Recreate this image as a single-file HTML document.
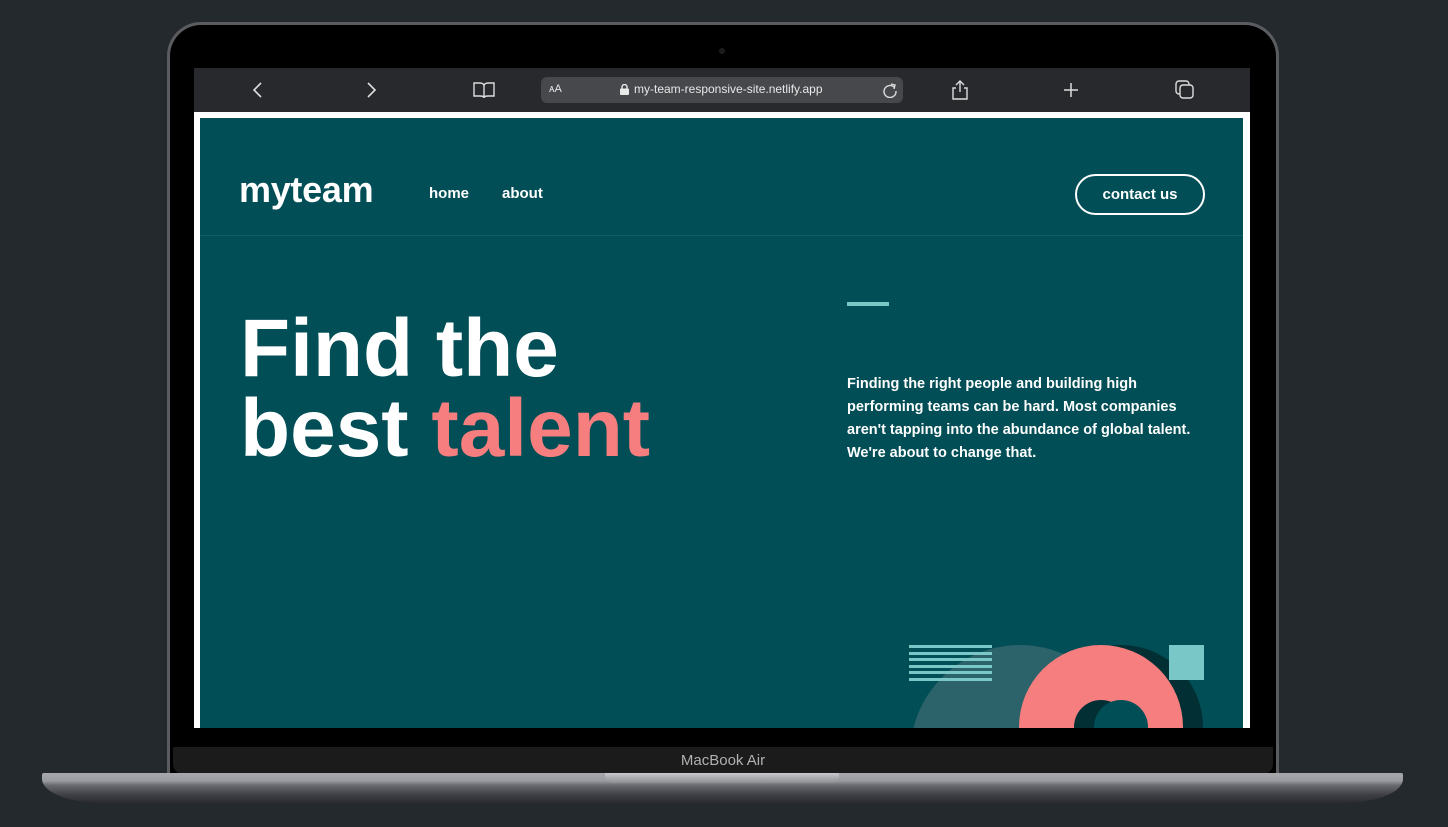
<!DOCTYPE html>
<html><head><meta charset="utf-8"><style>
*{margin:0;padding:0;box-sizing:border-box}
body{width:1448px;height:827px;background:#24292d;position:relative;overflow:hidden;font-family:"Liberation Sans",sans-serif}
.abs{position:absolute}
.lid{left:167px;top:22px;width:1112px;height:756px;border-radius:34px 34px 0 0;background:#000;border:3px solid #5a5c60;border-bottom:none}
.bar{left:194px;top:68px;width:1056px;height:44px;background:#27292c;color:#dcdcdc}
.url{left:347px;top:9px;width:362px;height:26px;background:#46484c;border-radius:6px;font-size:12px;color:#e8e8e8}
.screen{left:194px;top:112px;width:1056px;height:616px;background:#fff}
.teal{left:6px;top:6px;width:1043px;height:610px;background:#014e56;overflow:hidden;color:#fff}
.chin{left:173px;top:747px;width:1100px;height:27px;background:#1b1b1b;border-radius:0 0 10px 10px;color:#b0b0b0;font-size:15px;text-align:center;line-height:28px}
.base{left:42px;top:773px;width:1361px;height:30px;border-radius:2px 2px 60px 60px/2px 2px 24px 24px;background:linear-gradient(#a8a9ad 0,#9a9ba0 8px,#6b6c72 12px,#3e3f45 22px,#2a2b30 30px)}
.notch{left:605px;top:773px;width:234px;height:10px;background:linear-gradient(#c8c9cc,#8d8e92);border-radius:0 0 8px 8px}
</style></head><body>
<div class="abs lid"></div>
<div class="abs" style="left:719px;top:48px;width:6px;height:6px;border-radius:50%;background:#1c1c1e"></div>
<div class="abs bar">
 <svg class="abs" style="left:58px;top:14px" width="14" height="16"><path d="M9 1L2 8l7 7" stroke="#ddd" stroke-width="1.6" fill="none"/></svg>
 <svg class="abs" style="left:170px;top:14px" width="14" height="16"><path d="M4 1l7 7-7 7" stroke="#ddd" stroke-width="1.6" fill="none"/></svg>
 <svg class="abs" style="left:279px;top:13px" width="22" height="18"><path d="M1 2h6c2 0 4 1 4 3v12c0-2-2-2-4-2H1zM21 2h-6c-2 0-4 1-4 3v12c0-2 2-2 4-2h6z" stroke="#ddd" stroke-width="1.4" fill="none"/></svg>
 <div class="abs url"><span class="abs" style="left:8px;top:6px;font-size:11px">ᴀA</span>
  <svg class="abs" style="left:79px;top:7px" width="9" height="11"><rect x="0" y="4.5" width="9" height="6.5" rx="1" fill="#e8e8e8"/><path d="M2 5V3a2.5 2.5 0 015 0v2" stroke="#e8e8e8" stroke-width="1.4" fill="none"/></svg>
  <span class="abs" style="left:93px;top:5px">my-team-responsive-site.netlify.app</span>
  <svg class="abs" style="left:341px;top:5px" width="16" height="16"><path d="M12.5 5.5A6 6 0 1 0 14 9" stroke="#ddd" stroke-width="1.4" fill="none"/><path d="M9 2l4 1-1 4" stroke="#ddd" stroke-width="1.4" fill="none"/></svg>
 </div>
 <svg class="abs" style="left:756px;top:11px" width="20" height="22"><path d="M10 13V2M6 6l4-4 4 4M6 9H3v11h14V9h-3" stroke="#ddd" stroke-width="1.4" fill="none"/></svg>
 <svg class="abs" style="left:869px;top:14px" width="16" height="16"><path d="M8 1v14M1 8h14" stroke="#ddd" stroke-width="1.5"/></svg>
 <svg class="abs" style="left:981px;top:12px" width="20" height="20"><rect x="1" y="1" width="13" height="13" rx="3" stroke="#ddd" stroke-width="1.4" fill="none"/><rect x="5" y="5" width="13" height="13" rx="3" stroke="#ddd" stroke-width="1.4" fill="#27292c"/></svg>
</div>
<div class="abs screen"><div class="abs teal">
 <div class="abs" style="left:39px;top:51px;font-size:36px;font-weight:bold;letter-spacing:-0.3px">myteam</div>
 <div class="abs" style="left:229px;top:67px;font-size:15px;font-weight:bold">home</div>
 <div class="abs" style="left:302px;top:67px;font-size:15px;font-weight:bold">about</div>
 <div class="abs" style="left:875px;top:56px;width:130px;height:41px;border:2px solid #fff;border-radius:21px;font-size:15px;font-weight:bold;text-align:center;line-height:37px">contact us</div>
 <div class="abs" style="left:0;top:117px;width:1043px;height:1px;background:#0f5d65"></div>
 <div class="abs" style="left:40px;top:191px;font-size:82px;font-weight:bold;line-height:80px;letter-spacing:0px">Find the<br>best <span style="color:#f67e7e">talent</span></div>
 <div class="abs" style="left:647px;top:184px;width:42px;height:4px;background:#79c8c7"></div>
 <div class="abs" style="left:647px;top:255px;width:360px;font-size:14.5px;font-weight:bold;line-height:23px">Finding the right people and building high performing teams can be hard. Most companies aren't tapping into the abundance of global talent. We're about to change that.</div>
 <svg class="abs" style="left:700px;top:520px" width="320" height="100">
  <circle cx="120" cy="117" r="110" fill="#2c6269"/>
  <g fill="#79c8c7"><rect x="9" y="7" width="83" height="3"/><rect x="9" y="14" width="83" height="3"/><rect x="9" y="20" width="83" height="3"/><rect x="9" y="27" width="83" height="3"/><rect x="9" y="33" width="83" height="3"/><rect x="9" y="40" width="83" height="3"/></g>
  <circle cx="221" cy="89" r="82" fill="#012f34"/>
  <circle cx="201" cy="89" r="82" fill="#f67e7e"/>
  <circle cx="201" cy="89" r="27" fill="#012f34"/>
  <circle cx="221" cy="89" r="27" fill="#014e56"/>
  <rect x="269" y="7" width="35" height="35" fill="#79c8c7"/>
 </svg>
</div></div>
<div class="abs chin">MacBook Air</div>
<div class="abs base"></div>
<div class="abs notch"></div>
</body></html>
